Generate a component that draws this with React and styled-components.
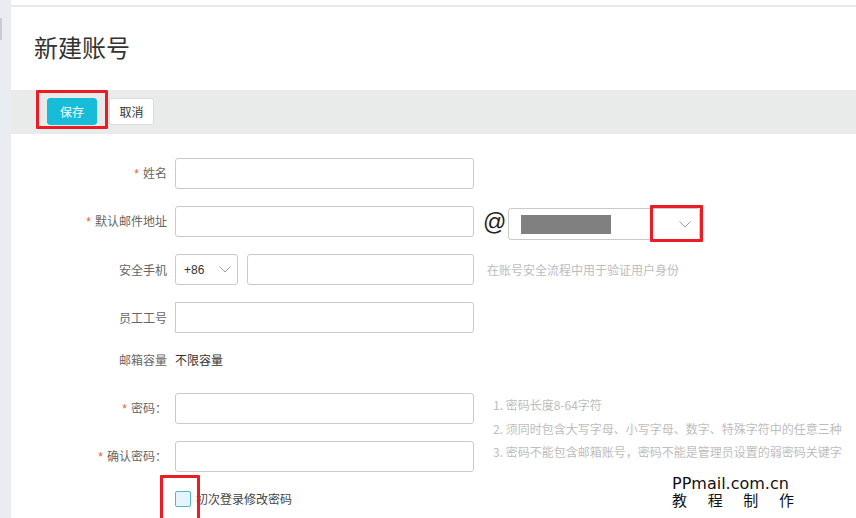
import React from "react";
import styled, { createGlobalStyle, css } from "styled-components";

const Global = createGlobalStyle`
  html, body { margin: 0; padding: 0; background: #fff; }
  body {
    font-family: "Liberation Sans", "Noto Sans CJK SC", sans-serif;
    font-size: 12px;
    color: #333;
  }
  * { box-sizing: border-box; }
`;

const Page = styled.div`
  position: relative;
  display: flex;
  width: 856px;
  height: 518px;
  overflow: hidden;
  background: #fff;
`;

const SideStrip = styled.div`
  width: 11px;
  flex: none;
  background: #e9ecf0;
  padding-top: 18px;
`;

const SideThumb = styled.div`
  width: 2px;
  height: 22px;
  background: #c9cdd2;
`;

const Main = styled.div`
  flex: 1;
  padding-top: 5px;
  display: flex;
  flex-direction: column;
`;

const Content = styled.div`
  flex: 1;
  border-top: 2px solid #e8e8e8;
  display: flex;
  flex-direction: column;
`;

const TitleBar = styled.div`
  height: 83px;
  padding: 27px 0 0 23px;
`;

const Title = styled.h1`
  margin: 0;
  font-family: "Noto Sans CJK SC", sans-serif;
  font-size: 24px;
  line-height: 26px;
  font-weight: 400;
  color: #333;
`;

const Toolbar = styled.div`
  height: 44px;
  background: #e9eaea;
  display: flex;
  align-items: flex-start;
  gap: 12px;
  padding: 8px 0 0 36px;
`;

const markFrame = css`
  position: relative;
  &::after {
    content: "";
    position: absolute;
    border: 3px solid #ec1c24;
    border-radius: 1px;
    pointer-events: none;
  }
`;

const Button = styled.button`
  height: 27px;
  padding: 0;
  width: ${(p) => p.$w}px;
  border-radius: 3px;
  font-family: "Noto Sans CJK SC", sans-serif;
  font-size: 12px;
  line-height: 25px;
  cursor: pointer;
  ${(p) =>
    p.$primary
      ? css`
          background: #17bcd8;
          border: 1px solid #17bcd8;
          color: #fff;
          ${markFrame}
          &::after { left: -12px; right: -12px; top: -9px; bottom: -5px; }
        `
      : css`
          background: #fff;
          border: 1px solid #dcdcdc;
          color: #333;
        `}
`;

const Form = styled.div`
  display: flex;
  flex-direction: column;
  gap: 17px;
  padding-top: 24px;
`;

const Row = styled.div`
  display: grid;
  grid-template-columns: 156px auto;
  column-gap: 8px;
  align-items: center;
  margin-bottom: ${(p) => p.$after || 0}px;
`;

const Label = styled.label`
  font-family: "Noto Sans CJK SC", sans-serif;
  font-size: 12px;
  color: #666;
  text-align: right;
  white-space: nowrap;
  line-height: 20px;
`;

const Star = styled.span`
  color: #e0603c;
  margin-right: 4px;
  font-family: "Liberation Sans", sans-serif;
`;

const Field = styled.div`
  display: flex;
  align-items: ${(p) => p.$align || "center"};
  gap: ${(p) => p.$gap ?? 0}px;
  ${(p) => p.$fixed && css`height: 31px;`}
`;

const Input = styled.input`
  width: ${(p) => p.$w || 299}px;
  height: 31px;
  border: 1px solid #cacaca;
  border-radius: ${(p) => (p.$square ? "0 3px 3px 0" : "3px")};
  background: #fff;
  outline: none;
  padding: 0 8px;
  font-size: 12px;
`;

const At = styled.span`
  font-family: "Liberation Sans", sans-serif;
  font-size: 23px;
  line-height: 24px;
  color: #222;
  margin: 4px 2px 0 9px;
`;

const Select = styled.div`
  flex: none;
  width: ${(p) => p.$w}px;
  height: ${(p) => p.$h || 31}px;
  margin-top: ${(p) => p.$mt || 0}px;
  border: 1px solid #cacaca;
  border-radius: 3px;
  display: flex;
  align-items: center;
  justify-content: space-between;
  padding: 0 ${(p) => p.$pr || 6}px 0 ${(p) => p.$pl || 8}px;
  font-size: 12px;
  color: #333;
  ${(p) =>
    p.$marked &&
    css`
      ${markFrame}
      &::after { right: -4px; top: -4px; bottom: -3px; width: 47px; }
    `}
`;

const Masked = styled.div`
  width: 90px;
  height: 19px;
  background: #808080;
`;

const Chevron = () => (
  <svg width="12" height="7" viewBox="0 0 12 7">
    <polyline points="0.5,0.5 6,6 11.5,0.5" fill="none" stroke="#a0a0a0" strokeWidth="1" />
  </svg>
);

const Hint = styled.span`
  font-family: "Noto Sans CJK SC", sans-serif;
  font-size: 12px;
  color: #bcbcbc;
  margin-left: ${(p) => p.$ml || 0}px;
  white-space: nowrap;
`;

const Value = styled.span`
  font-family: "Noto Sans CJK SC", sans-serif;
  font-size: 12px;
  color: #333;
  line-height: 20px;
`;

const PasswordBlock = styled.div`
  display: flex;
  align-items: flex-start;
`;

const PasswordRows = styled.div`
  display: flex;
  flex-direction: column;
  gap: 17px;
`;

const HintList = styled.ol`
  list-style: none;
  margin: 0 0 0 19px;
  padding: 0;
  display: flex;
  flex-direction: column;
`;

const HintItem = styled.li`
  font-family: "Noto Sans CJK SC", sans-serif;
  font-size: 12px;
  line-height: 23.5px;
  color: #bdbdbd;
  white-space: nowrap;
`;

const CheckRow = styled.div`
  display: flex;
  align-items: center;
  gap: 5px;
  padding-left: 164px;
  margin-top: 1px;
`;

const Checkbox = styled.span`
  width: 16px;
  height: 16px;
  border: 1px solid #54b7c8;
  border-radius: 2px;
  background: #e4f6fb;
  ${markFrame}
  &::after { left: -16px; right: -10px; top: -17px; bottom: -16px; }
`;

const CheckText = styled.span`
  font-family: "Noto Sans CJK SC", sans-serif;
  font-size: 12px;
  color: #444;
`;

const Watermark = styled.div`
  position: absolute;
  left: 672px;
  top: 476px;
  width: 122px;
  color: #111;
`;

const WmLine = styled.div`
  font-family: "DejaVu Sans", sans-serif;
  font-size: 16px;
  line-height: 16px;
`;

const WmChars = styled.div`
  display: flex;
  justify-content: space-between;
  font-family: "Noto Sans CJK SC", sans-serif;
  font-size: 15px;
  line-height: 16px;
`;

export default function App() {
  return (
    <>
      <Global />
      <Page>
        <SideStrip>
          <SideThumb />
        </SideStrip>
        <Main>
          <Content>
            <TitleBar>
              <Title>新建账号</Title>
            </TitleBar>
            <Toolbar>
              <Button $primary $w={50}>保存</Button>
              <Button $w={45}>取消</Button>
            </Toolbar>
            <Form>
              <Row>
                <Label><Star>*</Star>姓名</Label>
                <Field><Input /></Field>
              </Row>
              <Row>
                <Label><Star>*</Star>默认邮件地址</Label>
                <Field $align="flex-start" $fixed>
                  <Input />
                  <At>@</At>
                  <Select $w={192} $h={32} $mt={2} $pl={12} $pr={8} $marked>
                    <Masked />
                    <Chevron />
                  </Select>
                </Field>
              </Row>
              <Row>
                <Label>安全手机</Label>
                <Field $gap={9}>
                  <Select $w={63} $pr={6}>
                    <span>+86</span>
                    <Chevron />
                  </Select>
                  <Input $w={227} />
                  <Hint $ml={4}>在账号安全流程中用于验证用户身份</Hint>
                </Field>
              </Row>
              <Row>
                <Label>员工工号</Label>
                <Field><Input $square /></Field>
              </Row>
              <Row $after={6}>
                <Label>邮箱容量</Label>
                <Field><Value>不限容量</Value></Field>
              </Row>
              <PasswordBlock>
                <PasswordRows>
                  <Row>
                    <Label><Star>*</Star>密码：</Label>
                    <Field><Input type="password" /></Field>
                  </Row>
                  <Row>
                    <Label><Star>*</Star>确认密码：</Label>
                    <Field><Input type="password" /></Field>
                  </Row>
                </PasswordRows>
                <HintList>
                  <HintItem>1. 密码长度8-64字符</HintItem>
                  <HintItem>2. 须同时包含大写字母、小写字母、数字、特殊字符中的任意三种</HintItem>
                  <HintItem>3. 密码不能包含邮箱账号，密码不能是管理员设置的弱密码关键字</HintItem>
                </HintList>
              </PasswordBlock>
              <CheckRow>
                <Checkbox />
                <CheckText>初次登录修改密码</CheckText>
              </CheckRow>
            </Form>
          </Content>
        </Main>
        <Watermark>
          <WmLine>PPmail.com.cn</WmLine>
          <WmChars>
            <span>教</span><span>程</span><span>制</span><span>作</span>
          </WmChars>
        </Watermark>
      </Page>
    </>
  );
}
